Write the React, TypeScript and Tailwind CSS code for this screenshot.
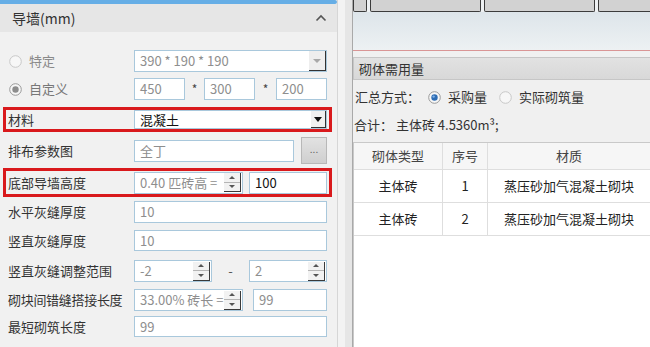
import React from "react";

const font = { fontFamily: '"Noto Sans CJK SC", "Microsoft YaHei", sans-serif' };

function Radio({ checked, blue }: { checked?: boolean; blue?: boolean }) {
  return (
    <svg width="13" height="13" viewBox="0 0 13 13" className="shrink-0">
      <circle cx="6.5" cy="6.5" r="5.8" fill="#f7f7f7" stroke={checked ? "#9a9a9a" : "#c8c8c8"} strokeWidth="1" />
      {checked && <circle cx="6.5" cy="6.5" r="3.2" fill={blue ? "#2e6db4" : "#8d8d8d"} />}
      {checked && blue && <circle cx="5.6" cy="5.6" r="1.2" fill="#7fb0e6" />}
    </svg>
  );
}

function Spin({ h = 19 }: { h?: number }) {
  return (
    <div
      className="flex w-[17px] shrink-0 flex-col border-r border-b border-[#3a3a3a] bg-[#f2f2f2]"
      style={{ height: h }}
    >
      <div className="flex flex-1 items-center justify-center border-b border-[#b5b5b5]">
        <div className="h-0 w-0 border-x-[3px] border-b-[3px] border-x-transparent border-b-[#555]" />
      </div>
      <div className="flex flex-1 items-center justify-center">
        <div className="h-0 w-0 border-x-[3px] border-t-[3px] border-x-transparent border-t-[#555]" />
      </div>
    </div>
  );
}

function Field({
  children,
  className = "",
  dark,
  h = 22,
}: {
  children?: React.ReactNode;
  className?: string;
  dark?: boolean;
  h?: number;
}) {
  return (
    <div
      className={`flex items-center border border-[#a9c8dc] bg-white pl-[5px] text-[13px] ${
        dark ? "text-[#111]" : "text-[#8e8e8e]"
      } ${className}`}
      style={{ height: h }}
    >
      {children}
    </div>
  );
}

function Row({
  label,
  red,
  h,
  mt,
  children,
}: {
  label: React.ReactNode;
  red?: boolean;
  h: number;
  mt: number;
  children: React.ReactNode;
}) {
  return (
    <div
      className={`flex items-center border-[3px] px-[2px] ${red ? "border-[#d9191c]" : "border-transparent"}`}
      style={{ height: h, marginTop: mt }}
    >
      <div className="w-[126px] shrink-0 text-[13px] text-[#333]">{label}</div>
      <div className="flex flex-1 items-center">{children}</div>
    </div>
  );
}

function LeftPanel() {
  return (
    <div className="flex w-[337px] shrink-0 flex-col bg-[#f1f1f1]">
      <div className="h-[4px] rounded-r-[3px] bg-[#66aee6]" />
      <div className="flex h-[28px] items-center justify-between bg-[#e6e6e6] pl-[12px] pr-[10px]">
        <span className="text-[14px] text-[#333]">导墙(mm)</span>
        <svg width="12" height="8" viewBox="0 0 12 8">
          <path d="M1.5 6.5 L6 2 L10.5 6.5" fill="none" stroke="#555" strokeWidth="1.6" />
        </svg>
      </div>
      <div className="flex flex-col pl-[3px] pr-[5px]">
        <Row
          mt={18}
          h={22}
          label={
            <div className="flex items-center gap-[7px] pl-[1px] text-[#8a8a8a]">
              <Radio />
              <span>特定</span>
            </div>
          }
        >
          <Field className="flex-1 justify-between">
            <span>390 * 190 * 190</span>
            <div className="flex h-[20px] w-[17px] items-center justify-center border-r border-b border-[#333] bg-[#eeeeee]">
              <div className="h-0 w-0 border-x-[4px] border-t-[4px] border-x-transparent border-t-[#a8a8a8]" />
            </div>
          </Field>
        </Row>
        <Row
          mt={6}
          h={22}
          label={
            <div className="flex items-center gap-[7px] pl-[1px] text-[#777]">
              <Radio checked />
              <span>自定义</span>
            </div>
          }
        >
          <Field className="w-[51px]">450</Field>
          <span className="w-[19px] text-center text-[12px] text-[#444]">*</span>
          <Field className="w-[51px]">300</Field>
          <span className="w-[21px] text-center text-[12px] text-[#444]">*</span>
          <Field className="w-[51px]">200</Field>
        </Row>
        <Row mt={7} h={25} red label="材料">
          <Field className="flex-1 justify-between" dark h={19}>
            <span>混凝土</span>
            <div className="flex h-[17px] w-[15px] items-center justify-center border-r border-b border-[#333] bg-[#f0f0f0]">
              <div className="h-0 w-0 border-x-[4px] border-t-[5px] border-x-transparent border-t-[#111]" />
            </div>
          </Field>
        </Row>
        <Row mt={5} h={27} label="排布参数图">
          <Field className="w-[160px]">全丁</Field>
          <div className="ml-[7px] flex h-[27px] w-[26px] items-start justify-center border border-[#b8b8b8] bg-gradient-to-b from-[#e2e2e2] to-[#cfcfcf] pt-[4px] text-[10px] leading-[14px] text-[#666]">
            ...
          </div>
        </Row>
        <Row mt={4} h={29} red label="底部导墙高度">
          <Field className="w-[109px] justify-between pr-[1px]">
            <span>0.40 匹砖高 =</span>
            <Spin />
          </Field>
          <Field className="ml-[6px] flex-1" dark>
            100
          </Field>
        </Row>
        <Row mt={4} h={22} label="水平灰缝厚度">
          <Field className="flex-1">10</Field>
        </Row>
        <Row mt={7} h={21} label="竖直灰缝厚度">
          <Field className="flex-1" h={21}>
            10
          </Field>
        </Row>
        <Row mt={9} h={22} label="竖直灰缝调整范围">
          <Field className="w-[78px] justify-between pr-[1px]">
            <span>-2</span>
            <Spin />
          </Field>
          <span className="w-[37px] text-center text-[13px] text-[#555]">-</span>
          <Field className="flex-1 justify-between pr-[1px]">
            <span>2</span>
            <Spin />
          </Field>
        </Row>
        <Row mt={7} h={22} label={<span className="tracking-[-0.3px]">砌块间错缝搭接长度</span>}>
          <Field className="w-[109px] justify-between pr-[1px]">
            <span className="whitespace-nowrap">33.00% 砖长 =</span>
            <Spin />
          </Field>
          <Field className="ml-[10px] flex-1">99</Field>
        </Row>
        <Row mt={5} h={21} label="最短砌筑长度">
          <Field className="flex-1" h={21}>
            99
          </Field>
        </Row>
      </div>
    </div>
  );
}

function RightPanel() {
  return (
    <div className="flex min-w-0 flex-1 flex-col bg-[#f0f0f0]">
      <div className="flex h-[12px] gap-[3px] bg-[#eef1f3]">
        <div className="h-full w-[14px] rounded-b-[2px] border border-t-0 border-[#3c3c3c] bg-[#d2d2d2]" />
        <div className="h-full w-[111px] rounded-b-[2px] border border-t-0 border-[#3c3c3c] bg-[#d2d2d2]" />
        <div className="h-full w-[111px] rounded-b-[2px] border border-t-0 border-[#3c3c3c] bg-[#d2d2d2]" />
        <div className="h-full flex-1 rounded-bl-[2px] border border-t-0 border-r-0 border-[#3c3c3c] bg-[#d2d2d2]" />
      </div>
      <div className="h-[39px] border-b border-[#d99595] bg-gradient-to-b from-[#dde5ea] to-[#edf1f3]" />
      <div className="mt-[6px] flex h-[23px] items-center border border-r-0 border-[#c6c6c6] bg-gradient-to-b from-[#e2e2e2] to-[#d8d8d8] pl-[5px] text-[13px] text-[#333]">
        砌体需用量
      </div>
      <div className="mt-[6px] flex h-[22px] items-center pl-[2px] text-[13px] text-[#333]">
        <span>汇总方式：</span>
        <span className="ml-[8px]">
          <Radio checked blue />
        </span>
        <span className="ml-[7px]">采购量</span>
        <span className="ml-[12px]">
          <Radio />
        </span>
        <span className="ml-[7px]">实际砌筑量</span>
      </div>
      <div className="mt-[6px] flex h-[22px] items-center pl-[1px] text-[13px] text-[#333]">
        合计： 主体砖 4.5360m³;
      </div>
      <div className="mt-[6px] flex-1 border-t border-l border-[#c9c9c9] bg-white">
        <div className="flex h-[27px] bg-[#f6f6f6] text-[13px] text-[#444]">
          <div className="flex w-[89px] items-center justify-center border-r border-b border-[#dedede]">砌体类型</div>
          <div className="flex w-[45px] items-center justify-center border-r border-b border-[#dedede]">序号</div>
          <div className="flex flex-1 items-center justify-center border-b border-[#dedede]">材质</div>
        </div>
        {[
          ["主体砖", "1", "蒸压砂加气混凝土砌块"],
          ["主体砖", "2", "蒸压砂加气混凝土砌块"],
        ].map((r, i) => (
          <div key={i} className="flex h-[33px] text-[13px] text-[#222]">
            <div className="flex w-[89px] items-center justify-center border-r border-b border-[#dedede]">{r[0]}</div>
            <div className="flex w-[45px] items-center justify-center border-r border-b border-[#dedede]">{r[1]}</div>
            <div className="flex flex-1 items-center justify-center border-b border-[#dedede]">{r[2]}</div>
          </div>
        ))}
      </div>
    </div>
  );
}

export default function App() {
  return (
    <div className="flex h-[347px] w-[650px] overflow-hidden bg-[#f0f0f0]" style={font}>
      <LeftPanel />
      <div className="flex w-[16px] shrink-0 border-l border-[#d6d6d6] bg-[#ececec]">
        <div className="w-[7px] bg-[#f3f3f3]" />
        <div className="flex-1 border-r border-[#a9a9a9] bg-[#e6e6e6]" />
      </div>
      <RightPanel />
    </div>
  );
}
